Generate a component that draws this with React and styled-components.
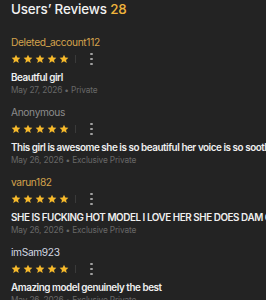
import React from "react";
import styled, { createGlobalStyle } from "styled-components";

const GlobalStyle = createGlobalStyle`
  html, body {
    margin: 0;
    padding: 0;
    background: #232323;
  }
  body {
    font-family: Inter, "Noto Sans", sans-serif;
    overflow: hidden;
  }
`;

const Page = styled.div`
  width: 266px;
  height: 300px;
  overflow: hidden;
  padding: 0 11px;
  box-sizing: border-box;
  background: #232323;
`;

const Title = styled.h2`
  margin: 0;
  font-size: 13.4px;
  letter-spacing: -0.15px;
  line-height: 18px;
  font-weight: 500;
  color: #f2f2f2;
  white-space: nowrap;
  span {
    color: #f0b43c;
  }
`;

const List = styled.div`
  margin-top: 17px;
`;

const Review = styled.div`
  padding-bottom: 9px;
`;

const tones = {
  gold: "#d4a24c",
  grey: "#8c8c8c",
  light: "#d3d8e2",
};

const User = styled.div`
  font-size: 10.2px;
  letter-spacing: -0.35px;
  line-height: 14px;
  color: ${(p) => tones[p.$tone] || tones.gold};
  white-space: nowrap;
`;

const RatingRow = styled.div`
  display: flex;
  align-items: center;
  height: 10px;
  margin-top: 5px;
`;

const Stars = styled.div`
  display: flex;
  gap: 2px;
  svg {
    width: 10px;
    height: 10px;
    fill: #f6b92b;
  }
`;

const Divider = styled.div`
  width: 1px;
  height: 8px;
  background: #3a3a3a;
  margin: 0 14px 0 6px;
`;

const More = styled.div`
  display: flex;
  flex-direction: column;
  gap: 2.5px;
  i {
    width: 2.5px;
    height: 2.5px;
    border-radius: 50%;
    background: #a0a0a0;
  }
`;

const Body = styled.div`
  margin-top: 6px;
  font-size: 9.9px;
  letter-spacing: -0.45px;
  line-height: 14px;
  font-weight: 600;
  color: #efefef;
  white-space: nowrap;
`;

const Meta = styled.div`
  font-size: 8.3px;
  letter-spacing: -0.15px;
  line-height: 12px;
  color: #686868;
  white-space: nowrap;
`;

const Star = () => (
  <svg viewBox="0 0 24 24">
    <path d="M12 1.5l3.1 6.9 7.4.7-5.6 5 1.7 7.4L12 17.6l-6.6 3.9 1.7-7.4-5.6-5 7.4-.7z" />
  </svg>
);

const reviews = [
  {
    user: "Deleted_account112",
    tone: "gold",
    text: "Beautful girl",
    date: "May 27, 2026",
    kind: "Private",
  },
  {
    user: "Anonymous",
    tone: "grey",
    text: "This girl is awesome she is so beautiful her voice is so soothing",
    date: "May 26, 2026",
    kind: "Exclusive Private",
  },
  {
    user: "varun182",
    tone: "gold",
    text: "SHE IS FUCKING HOT MODEL I LOVE HER SHE DOES DAM GOOD",
    date: "May 26, 2026",
    kind: "Exclusive Private",
  },
  {
    user: "imSam923",
    tone: "light",
    text: "Amazing model genuinely the best",
    date: "May 26, 2026",
    kind: "Exclusive Private",
  },
];

export default function App() {
  return (
    <Page>
      <GlobalStyle />
      <Title>
        Users’ Reviews <span>28</span>
      </Title>
      <List>
        {reviews.map((r) => (
          <Review key={r.user}>
            <User $tone={r.tone}>{r.user}</User>
            <RatingRow>
              <Stars>
                {[0, 1, 2, 3, 4].map((i) => (
                  <Star key={i} />
                ))}
              </Stars>
              <Divider />
              <More>
                <i />
                <i />
                <i />
              </More>
            </RatingRow>
            <Body>{r.text}</Body>
            <Meta>
              {r.date} • {r.kind}
            </Meta>
          </Review>
        ))}
      </List>
    </Page>
  );
}
